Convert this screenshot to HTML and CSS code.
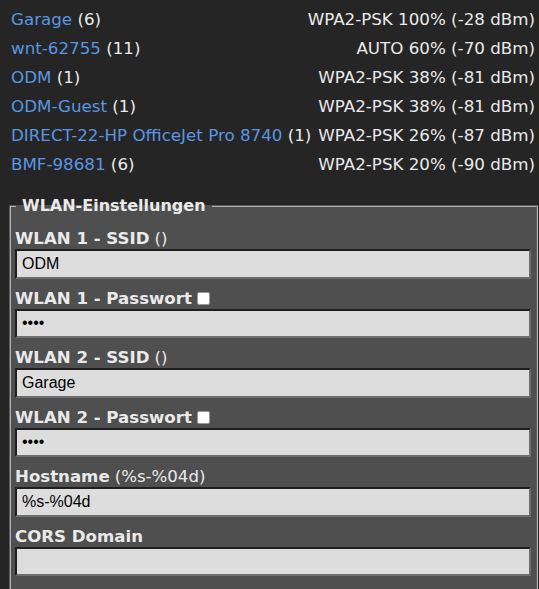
FILE: index.html
```html
<!DOCTYPE html>
<html lang="de">
<head>
<meta charset="utf-8">
<title>WLAN</title>
<link rel="stylesheet" href="styles.css">
</head>
<body>
<div class="page">
  <div class="scan">
    <div class="net"><span><a href="#">Garage</a> (6)</span><span>WPA2-PSK 100% (-28 dBm)</span></div>
    <div class="net"><span><a href="#">wnt-62755</a> (11)</span><span>AUTO 60% (-70 dBm)</span></div>
    <div class="net"><span><a href="#">ODM</a> (1)</span><span>WPA2-PSK 38% (-81 dBm)</span></div>
    <div class="net"><span><a href="#">ODM-Guest</a> (1)</span><span>WPA2-PSK 38% (-81 dBm)</span></div>
    <div class="net"><span><a href="#">DIRECT-22-HP OfficeJet Pro 8740</a> (1)</span><span>WPA2-PSK 26% (-87 dBm)</span></div>
    <div class="net"><span><a href="#">BMF-98681</a> (6)</span><span>WPA2-PSK 20% (-90 dBm)</span></div>
  </div>
  <fieldset class="box">
    <legend>WLAN-Einstellungen</legend>
    <div class="field">
      <label>WLAN 1 - SSID <span class="hint">()</span></label>
      <input type="text" value="ODM">
    </div>
    <div class="field">
      <label>WLAN 1 - Passwort <span class="chk"></span></label>
      <input type="password" value="odmx">
    </div>
    <div class="field">
      <label>WLAN 2 - SSID <span class="hint">()</span></label>
      <input type="text" value="Garage">
    </div>
    <div class="field">
      <label>WLAN 2 - Passwort <span class="chk"></span></label>
      <input type="password" value="gara">
    </div>
    <div class="field">
      <label>Hostname <span class="hint">(%s-%04d)</span></label>
      <input type="text" value="%s-%04d">
    </div>
    <div class="field">
      <label>CORS Domain</label>
      <input type="text" value="">
    </div>
  </fieldset>
</div>
</body>
</html>
```
FILE: styles.css
```css
html, body {
  margin: 0;
  padding: 0;
  background: #252525;
  color: #eaeaea;
  font-family: "DejaVu Sans", Verdana, sans-serif;
  font-size: 16px;
}
.page {
  padding: 5px 1px 0 9px;
}
.scan {
  padding: 0 3px 0 2px;
  margin-bottom: 17px;
  font-size: 16.7px;
}
.net {
  display: flex;
  justify-content: space-between;
  line-height: 29px;
  white-space: nowrap;
}
.net a {
  color: #5a96e3;
  text-decoration: none;
}
.box {
  margin: 0;
  padding: 3px 5px 30px 4px;
  border: 2px groove #b0b0b0;
  background: #4f4f4f;
  min-width: 0;
}
.box legend {
  font-weight: bold;
  padding: 0 6px;
  margin-left: 1px;
  line-height: 20px;
}
.field label {
  display: flex;
  align-items: center;
  gap: 5px;
  font-weight: bold;
  font-size: 16.6px;
  line-height: 20px;
  margin-top: 10px;
}
.hint {
  font-weight: normal;
}
.chk {
  display: inline-block;
  width: 11px;
  height: 11px;
  background: #fff;
  border: 1px solid #999;
  border-radius: 2px;
}
.field input {
  display: block;
  width: 100%;
  box-sizing: border-box;
  height: 29.5px;
  margin: 0;
  padding: 0 5px;
  background: #dddddd;
  color: #000;
  font-family: "Liberation Sans", Arial, sans-serif;
  font-size: 16px;
  border-style: solid;
  border-width: 2px;
  border-color: #1e1e1e #6e6e6e #6e6e6e #1e1e1e;
  outline: none;
}
```
